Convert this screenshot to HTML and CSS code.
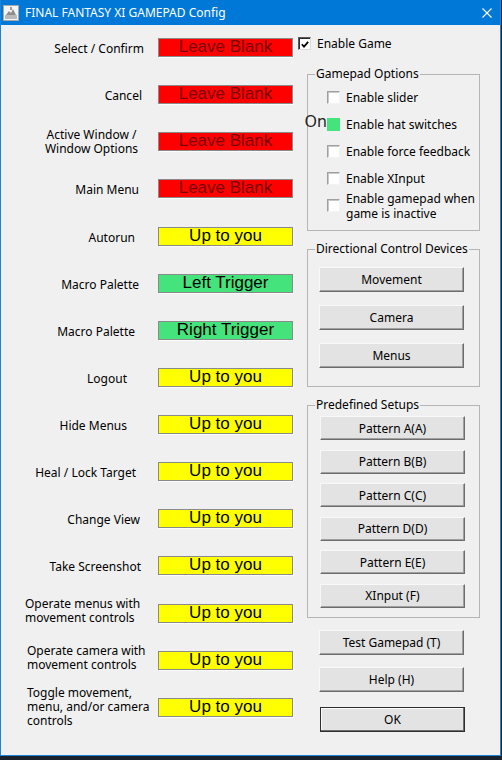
FILE: index.html
```html
<!DOCTYPE html>
<html lang="en">
<head>
<meta charset="utf-8">
<title>FINAL FANTASY XI GAMEPAD Config</title>
<link rel="stylesheet" href="styles.css">
</head>
<body>
<div class="window">
  <header class="titlebar">
    <svg class="app-icon" viewBox="0 0 16 16" width="16" height="16">
      <rect x="0.5" y="0.5" width="15" height="15" fill="#f4f4f4" stroke="#a8a8a8"/>
      <rect x="2" y="10" width="12" height="4" fill="#b9b9b9"/>
      <path d="M3 10 L6 6 L8 8 L10 4 L13 10 Z" fill="#8d8d8d"/>
      <rect x="7" y="2" width="2" height="3" fill="#9c9c9c"/>
    </svg>
    <span class="title">FINAL FANTASY XI GAMEPAD Config</span>
    <svg class="close" viewBox="0 0 10 10" width="10" height="10">
      <path d="M0.5 0.5 L9.5 9.5 M9.5 0.5 L0.5 9.5" stroke="#fff" stroke-width="1.1" fill="none"/>
    </svg>
  </header>
  <main class="body">
    <section class="bindings">
      <div class="row"><span class="label pr14">Select / Confirm</span><span class="field blank">Leave Blank</span></div>
      <div class="row"><span class="label pr16">Cancel</span><span class="field blank">Leave Blank</span></div>
      <div class="row"><span class="label pr14 centered">Active Window /<br>Window Options</span><span class="field blank">Leave Blank</span></div>
      <div class="row"><span class="label pr19">Main Menu</span><span class="field blank">Leave Blank</span></div>
      <div class="row"><span class="label pr23">Autorun</span><span class="field free">Up to you</span></div>
      <div class="row"><span class="label pr19">Macro Palette</span><span class="field set">Left Trigger</span></div>
      <div class="row"><span class="label pr23">Macro Palette</span><span class="field set">Right Trigger</span></div>
      <div class="row"><span class="label pr31">Logout</span><span class="field free">Up to you</span></div>
      <div class="row"><span class="label pr31">Hide Menus</span><span class="field free">Up to you</span></div>
      <div class="row"><span class="label pr22">Heal / Lock Target</span><span class="field free">Up to you</span></div>
      <div class="row"><span class="label pr18">Change View</span><span class="field free">Up to you</span></div>
      <div class="row"><span class="label pr17">Take Screenshot</span><span class="field free">Up to you</span></div>
      <div class="row"><span class="label left up pl24">Operate menus with<br>movement controls</span><span class="field free">Up to you</span></div>
      <div class="row"><span class="label left up pl26">Operate camera with<br>movement controls</span><span class="field free">Up to you</span></div>
      <div class="row"><span class="label left pl26">Toggle movement,<br>menu, and/or camera<br>controls</span><span class="field free">Up to you</span></div>
    </section>

    <aside class="side">
      <div class="check-row game">
        <span class="box checked">
          <svg viewBox="0 0 11 11" width="11" height="11"><path d="M2 5.2 L4.4 7.8 L9 2.6" stroke="#000" stroke-width="1.9" fill="none"/></svg>
        </span>
        <span>Enable Game</span>
      </div>

      <fieldset class="group options">
        <legend>Gamepad Options</legend>
        <div class="opt-list">
          <div class="check-row"><span class="box"></span><span>Enable slider</span></div>
          <div class="check-row"><span class="box on"><span class="on-tag">On</span></span><span>Enable hat switches</span></div>
          <div class="check-row"><span class="box"></span><span>Enable force feedback</span></div>
          <div class="check-row"><span class="box"></span><span>Enable XInput</span></div>
          <div class="check-row"><span class="box"></span><span class="two-line">Enable gamepad when<br>game is inactive</span></div>
        </div>
      </fieldset>

      <fieldset class="group directional">
        <legend>Directional Control Devices</legend>
        <div class="btn-list dir-list">
          <button class="btn">Movement</button>
          <button class="btn">Camera</button>
          <button class="btn">Menus</button>
        </div>
      </fieldset>

      <fieldset class="group presets">
        <legend>Predefined Setups</legend>
        <div class="btn-list preset-list">
          <button class="btn small">Pattern A(A)</button>
          <button class="btn small">Pattern B(B)</button>
          <button class="btn small">Pattern C(C)</button>
          <button class="btn small">Pattern D(D)</button>
          <button class="btn small">Pattern E(E)</button>
          <button class="btn small">XInput (F)</button>
        </div>
      </fieldset>

      <div class="actions">
        <button class="btn">Test Gamepad (T)</button>
        <button class="btn">Help (H)</button>
        <button class="btn default">OK</button>
      </div>
    </aside>
  </main>
</div>
</body>
</html>
```

FILE: styles.css
```css
* { box-sizing: border-box; }

html, body { margin: 0; padding: 0; }

body {
  width: 502px;
  height: 760px;
  overflow: hidden;
  background: #1a222c;
  font-family: "Noto Sans", "Open Sans", sans-serif;
  font-size: 12px;
  color: #000;
}

.window {
  width: 501px;
  height: 756px;
  background: #f0f0f0;
  border: 1px solid #1883d7;
  border-top: none;
  display: flex;
  flex-direction: column;
}

/* Title bar */
.titlebar {
  height: 25px;
  flex: none;
  background: #0078d7;
  display: flex;
  align-items: center;
  padding-left: 2px;
}

.app-icon { flex: none; margin-top: 1px; }

.title {
  color: #fff;
  margin-left: 6px;
  line-height: 16px;
}

.close {
  flex: none;
  margin-left: auto;
  margin-right: 8px;
  margin-top: 1px;
}

/* Body */
.body {
  flex: 1;
  display: flex;
}

.bindings {
  width: 294px;
  flex: none;
  padding-top: 13px;
  display: flex;
  flex-direction: column;
  gap: 28.14px;
}

.row {
  height: 19px;
  display: flex;
  align-items: center;
}

.label {
  width: 157px;
  flex: none;
  margin-top: 3px;
  text-align: right;
  line-height: 14px;
  white-space: nowrap;
}

.label.centered { text-align: center; padding-left: 38px; margin-top: 0; }
.label.left { text-align: left; margin-top: 0; }
.label.left.up { margin-top: -4px; }

.pr14 { padding-right: 14px; }
.pr16 { padding-right: 16px; }
.pr17 { padding-right: 17px; }
.pr18 { padding-right: 18px; }
.pr19 { padding-right: 19px; }
.pr22 { padding-right: 22px; }
.pr23 { padding-right: 23px; }
.pr31 { padding-right: 31px; }
.pl24 { padding-left: 24px; }
.pl26 { padding-left: 26px; }

.field {
  width: 135px;
  height: 19px;
  flex: none;
  border: 1px solid #8a8a8a;
  box-shadow: 1px 1px 0 #fdfdfd;
  font-family: "Liberation Sans", Arial, sans-serif;
  font-size: 17px;
  line-height: 16px;
  text-align: center;
  white-space: nowrap;
}

.field.blank { background: #ff0000; color: #780000; }
.field.free { background: #ffff00; color: #000; }
.field.set { background: #45e37c; color: #000; }

/* Right column */
.side {
  flex: 1;
  display: flex;
  flex-direction: column;
}

.check-row {
  height: 13px;
  display: flex;
  align-items: center;
  gap: 6px;
  white-space: nowrap;
}

.check-row.game {
  margin-top: 12px;
  padding-left: 3px;
}

.box {
  position: relative;
  width: 13px;
  height: 13px;
  flex: none;
  background: #fff;
  border: 1px solid;
  border-color: #a0a0a0 #f4f4f4 #f4f4f4 #a0a0a0;
  box-shadow: inset 1px 1px 0 #c8c8c8;
  display: flex;
  align-items: center;
  justify-content: center;
}

.box.checked {
  border-color: #5a5a5a #dcdcdc #dcdcdc #5a5a5a;
  box-shadow: inset 1px 1px 0 #2b2b2b;
}

.box.checked svg { margin: 1px 0 0 1px; }

.box.on {
  background: #45e37c;
  border-color: #45e37c;
  box-shadow: none;
}

.on-tag {
  position: absolute;
  right: calc(100% + 1px);
  top: -6px;
  font-size: 16px;
  line-height: 16px;
  color: #222;
}

.two-line { line-height: 15px; }

.group {
  margin: 0 0 0 12px;
  width: 173px;
  padding: 0;
  border: 1px solid #b5b5b5;
  min-width: 0;
}

.group legend {
  margin-left: 7px;
  padding: 0 1px;
  line-height: 16px;
  white-space: nowrap;
}

.options { margin-top: 16px; }

.opt-list {
  padding: 9px 0 18px 19px;
  display: flex;
  flex-direction: column;
  gap: 14px;
}

.directional { margin-top: 10px; }
.presets { margin-top: 10px; }

.btn-list {
  display: flex;
  flex-direction: column;
}

.dir-list {
  padding: 10px 0 18px 11px;
  gap: 13px;
}

.preset-list {
  padding: 3px 0 9px 12px;
  gap: 9.6px;
}

.btn {
  width: 145px;
  height: 25px;
  margin: 0;
  padding: 0;
  font-family: "Noto Sans", "Open Sans", sans-serif;
  font-size: 12px;
  color: #000;
  background: #e3e3e3;
  border: 1px solid;
  border-color: #f8f8f8 #6d6d6d #6d6d6d #f8f8f8;
  box-shadow: inset -1px -1px 0 #a0a0a0;
  border-radius: 0;
}

.btn.small { height: 24px; }

.actions {
  margin-top: 12px;
  padding-left: 24px;
  display: flex;
  flex-direction: column;
  gap: 12px;
}

.btn.default {
  margin-top: 3px;
  margin-left: 1px;
  border: 1px solid #2e2e2e;
  box-shadow: inset -1px -1px 0 #6d6d6d, inset 1px 1px 0 #fafafa;
}
```
